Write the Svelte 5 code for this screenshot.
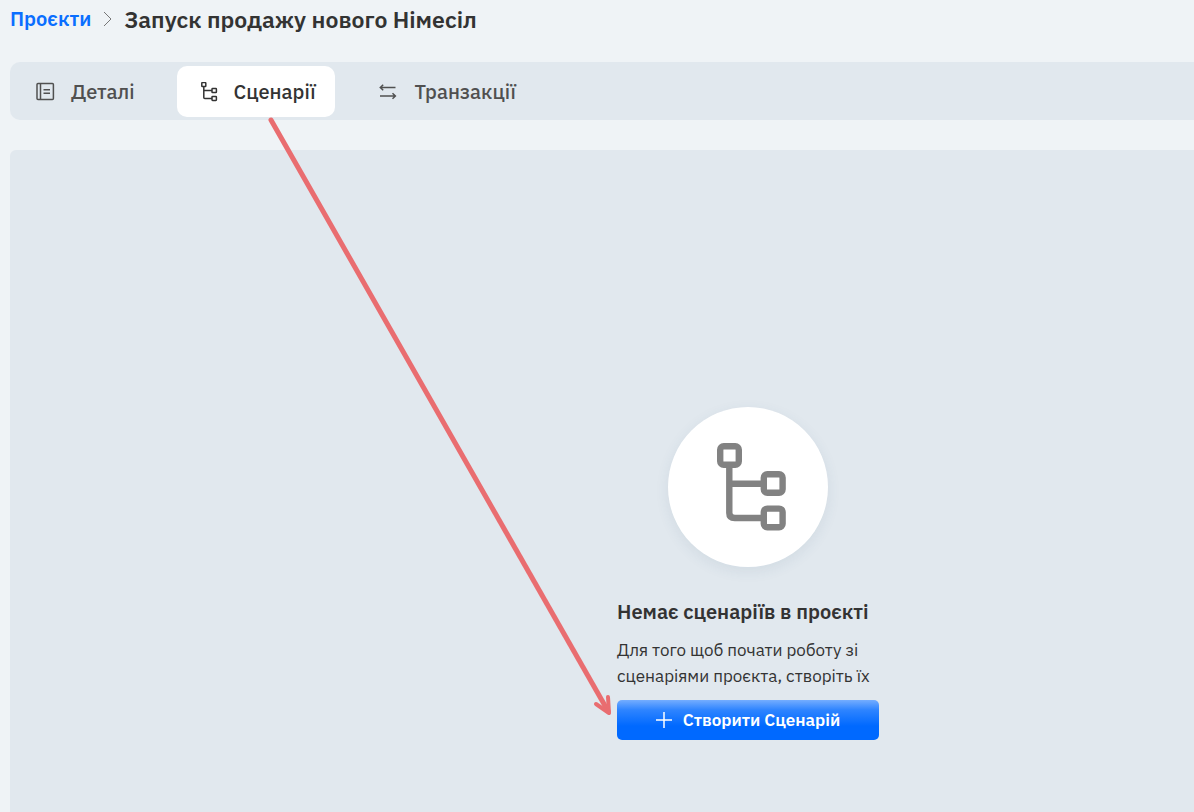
<script lang="ts">
	interface Tab {
		id: string;
		label: string;
	}

	const tabs: Tab[] = [
		{ id: 'details', label: 'Деталі' },
		{ id: 'scenarios', label: 'Сценарії' },
		{ id: 'transactions', label: 'Транзакції' }
	];

	let active = $state('scenarios');
</script>

{#snippet tabIcon(id: string)}
	{#if id === 'details'}
		<svg class="tab-icon" viewBox="0 0 20 20" aria-hidden="true">
			<rect x="1" y="1.5" width="16.4" height="16" rx="1" />
			<path d="M4.5 1.5v16M7.5 7.8h6.5M7.5 11.2h6.5" />
		</svg>
	{:else if id === 'scenarios'}
		<svg class="tab-icon" viewBox="0 0 20 20" aria-hidden="true">
			<rect x="2.8" y="0.6" width="4" height="4" rx="0.6" />
			<rect x="13" y="6.6" width="4.4" height="4" rx="0.6" />
			<rect x="13" y="14.4" width="4.4" height="4" rx="0.6" />
			<path d="M4.8 4.8v10.6q0 1 1 1H13M4.8 8.6H13" />
		</svg>
	{:else}
		<svg class="tab-icon" viewBox="0 0 20 20" aria-hidden="true">
			<path d="M16.5 5.5H1.5M4.2 2.7L1.3 5.5l2.9 2.8M1 14h15.2M13.5 11.2l2.9 2.8-2.9 2.8" />
		</svg>
	{/if}
{/snippet}

<div class="page">
	<header class="breadcrumbs">
		<a href="#projects">Проєкти</a>
		<svg class="chevron" viewBox="0 0 10 16" aria-hidden="true">
			<path d="M1 1l7 7-7 7" />
		</svg>
		<h1>Запуск продажу нового Німесіл</h1>
	</header>

	<nav class="tabs">
		{#each tabs as tab (tab.id)}
			<button type="button" class="tab" class:active={active === tab.id} onclick={() => (active = tab.id)}>
				{@render tabIcon(tab.id)}
				{tab.label}
			</button>
		{/each}
	</nav>

	<main class="panel">
		<section class="empty">
			<div class="circle">
				<svg viewBox="0 0 70 88" aria-hidden="true">
					<rect x="3.2" y="3.2" width="18.6" height="18.6" rx="3.5" />
					<rect x="46.8" y="31.2" width="18.8" height="18.6" rx="3.5" />
					<rect x="46.8" y="65.6" width="18.8" height="18.6" rx="3.5" />
					<path d="M12.3 22v48q0 5 5.5 5H47M12.3 40.8H47" />
				</svg>
			</div>
			<h2>Немає сценаріїв в проєкті</h2>
			<p>Для того щоб почати роботу зі<br />сценаріями проєкта, створіть їх</p>
			<button type="button" class="create">
				<svg viewBox="0 0 16 16" aria-hidden="true">
					<path d="M8 0v16M0 8h16" />
				</svg>
				Створити Сценарій
			</button>
		</section>
	</main>

	<svg class="arrow" viewBox="0 0 350 605" aria-hidden="true">
		<path class="shaft" d="M6 5L343 596" />
		<path class="head" d="M331 589L344 598 343 582" />
	</svg>
</div>

<style>
	:global(body) {
		background: #eff3f6;
	}

	.page {
		position: relative;
		display: flex;
		flex-direction: column;
		box-sizing: border-box;
		min-height: 100vh;
		padding-left: 10px;
		overflow: hidden;
		font-family: 'IBM Plex Sans', 'Noto Sans', sans-serif;
		color: #333;
	}

	svg {
		flex: none;
		fill: none;
		stroke: currentColor;
	}

	.breadcrumbs {
		display: flex;
		align-items: center;
		height: 38px;
	}

	.breadcrumbs a {
		color: #0a6eff;
		font-size: 20px;
		font-weight: 600;
		line-height: 26px;
		text-decoration: none;
	}

	.chevron {
		width: 10px;
		height: 16px;
		margin: 0 11px 0 12px;
		color: #777;
	}

	h1 {
		margin: 0;
		font-size: 23px;
		font-weight: 600;
		line-height: 30px;
		white-space: nowrap;
	}

	.tabs {
		display: flex;
		gap: 22px;
		margin-top: 24px;
		padding: 4px 4px 3px;
		border-radius: 10px 0 0 10px;
		background: #e1e8ee;
	}

	.tab {
		display: flex;
		align-items: center;
		gap: 15px;
		height: 51px;
		padding: 0 20px 0 22px;
		border: 0;
		border-radius: 10px;
		background: none;
		color: #505050;
		font: 500 20px/26px 'IBM Plex Sans', 'Noto Sans', sans-serif;
		cursor: pointer;
	}

	.tab.active {
		background: #fff;
		color: #333;
	}

	.tab-icon {
		width: 20px;
		height: 20px;
		stroke-width: 1.5;
	}

	.panel {
		flex: 1;
		display: flex;
		justify-content: center;
		margin-top: 30px;
		padding: 257px 0 72px 292px;
		border-radius: 6px 0 0;
		background: #e1e8ee;
	}

	.empty {
		display: flex;
		flex-direction: column;
		width: 262px;
	}

	.circle {
		display: grid;
		place-items: center;
		align-self: center;
		width: 160px;
		height: 160px;
		border-radius: 50%;
		background: #fff;
		box-shadow: 0 4px 14px rgb(60 90 120 / 9%);
		color: #828282;
	}

	.circle svg {
		width: 70px;
		height: 88px;
		margin-left: 8px;
		stroke-width: 6.4;
	}

	h2 {
		margin: 32px 0 12px;
		font-size: 20px;
		font-weight: 600;
		line-height: 26px;
		white-space: nowrap;
	}

	p {
		margin: 0 0 11px;
		font-size: 17px;
		line-height: 26px;
		white-space: nowrap;
	}

	.create {
		display: flex;
		align-items: center;
		justify-content: center;
		gap: 11px;
		height: 40px;
		padding: 0;
		border: 0;
		border-radius: 5px;
		background: linear-gradient(#74adff, #2e84ff 25%, #0069ff 65%);
		color: #fff;
		font: 600 17px/26px 'IBM Plex Sans', 'Noto Sans', sans-serif;
		white-space: nowrap;
		cursor: pointer;
	}

	.create svg {
		width: 16px;
		height: 16px;
		stroke-width: 1.5;
	}

	.arrow {
		position: absolute;
		top: 115px;
		left: 265px;
		width: 350px;
		height: 605px;
		color: #e96d70;
		pointer-events: none;
	}

	.shaft {
		stroke-width: 5;
		stroke-linecap: round;
	}

	.head {
		stroke-width: 4;
		stroke-linecap: round;
		stroke-linejoin: round;
	}
</style>
